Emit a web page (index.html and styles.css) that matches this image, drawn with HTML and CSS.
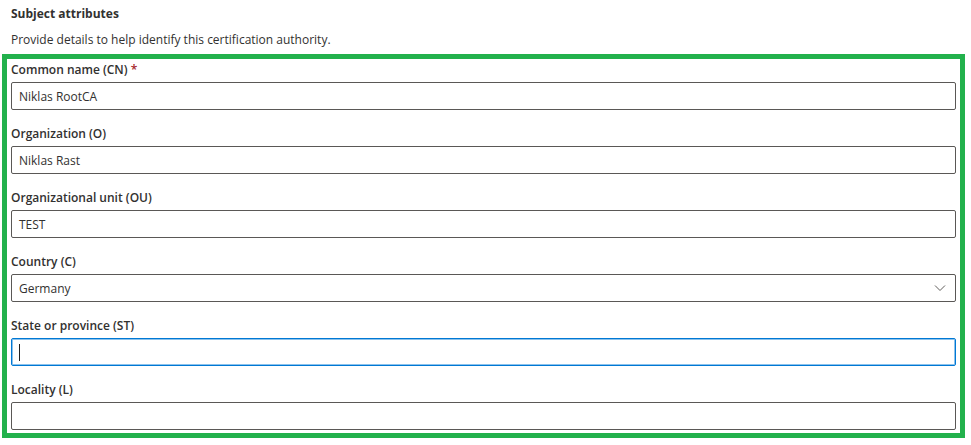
FILE: index.html
```html
<!DOCTYPE html>
<html>
<head>
<meta charset="utf-8">
<link rel="stylesheet" href="styles.css">
</head>
<body>
<div class="page">
  <div class="header">
    <div class="title">Subject attributes</div>
    <div class="desc">Provide details to help identify this certification authority.</div>
  </div>
  <div class="highlight">
    <div class="field">
      <div class="label">Common name (CN) <span class="req">*</span></div>
      <div class="input"><span class="value">Niklas RootCA</span></div>
    </div>
    <div class="field">
      <div class="label">Organization (O)</div>
      <div class="input"><span class="value">Niklas Rast</span></div>
    </div>
    <div class="field">
      <div class="label">Organizational unit (OU)</div>
      <div class="input"><span class="value">TEST</span></div>
    </div>
    <div class="field">
      <div class="label">Country (C)</div>
      <div class="input select"><span class="value">Germany</span>
        <svg class="chev" width="12" height="8" viewBox="0 0 12 8"><path d="M1 1.5 L6 6.5 L11 1.5" fill="none" stroke="#605e5c" stroke-width="1"/></svg>
      </div>
    </div>
    <div class="field">
      <div class="label">State or province (ST)</div>
      <div class="input focused"><span class="caret"></span></div>
    </div>
    <div class="field last">
      <div class="label">Locality (L)</div>
      <div class="input"></div>
    </div>
  </div>
</div>
</body>
</html>
```
FILE: styles.css
```css
html, body {
  margin: 0;
  padding: 0;
  background: #ffffff;
}
body {
  font-family: "Open Sans", "Noto Sans", sans-serif;
  font-size: 12px;
  color: #323130;
}
.page {
  width: 971px;
  height: 445px;
  overflow: hidden;
}
.header {
  padding: 5px 0 0 11px;
  height: 54px;
  box-sizing: border-box;
}
.title {
  font-weight: 700;
  line-height: 18px;
  height: 18px;
}
.desc {
  margin-top: 8px;
  line-height: 18px;
}
.highlight {
  margin-left: 2px;
  width: 963px;
  box-sizing: border-box;
  border: 5px solid #22b14c;
  padding: 2px 4px 3px 4px;
}
.field {
  display: flex;
  flex-direction: column;
  gap: 3px;
  margin-bottom: 15px;
}
.field.last {
  margin-bottom: 0;
}
.label {
  font-weight: 600;
  line-height: 18px;
  height: 18px;
}
.req {
  color: #a4262c;
}
.input {
  height: 28px;
  box-sizing: border-box;
  border: 1px solid #5a5856;
  border-radius: 2px;
  display: flex;
  align-items: center;
  padding: 0 7px;
  position: relative;
}
.input.focused {
  border-color: #0078d4;
  box-shadow: inset 0 0 0 1px rgba(0, 120, 212, 0.45);
}
.input.select {
  justify-content: space-between;
  padding-right: 9px;
}
.caret {
  width: 1px;
  height: 17px;
  background: #222;
}
.chev {
  display: block;
}
```
